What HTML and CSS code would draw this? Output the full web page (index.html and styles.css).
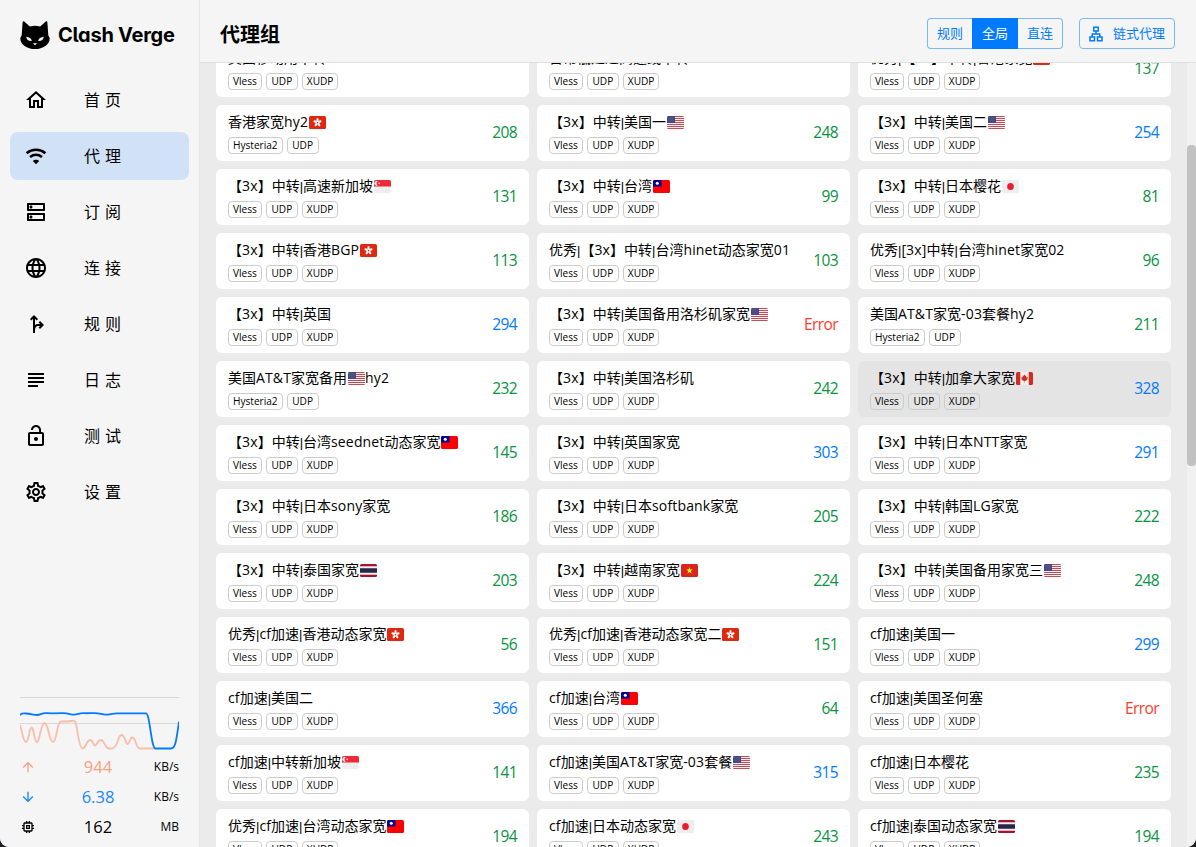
FILE: index.html
```html
<!DOCTYPE html>
<html lang="zh-CN">
<head>
    <meta charset="UTF-8">
    <meta name="viewport" content="width=device-width, initial-scale=1.0">
    <title>Clash Verge</title>
    <link rel="stylesheet" href="styles.css">
</head>
<body>
    <div class="app">
        <aside class="sidebar">
            <div class="brand">
                <svg class="brand-logo" viewBox="0 0 30 28">
                    <path d="M2.600 1.600C2.800.2 3.600 0 4.500.8l5.300 4.600c3.400-.8 7-.8 10.400 0L25.500.8c.9-.8 1.700-.6 1.900.8l.9 12.600c.3 1 1.400 1.800 1.400 3.200C29.700 23.500 23 28 15 28S.3 23.500.3 17.400c0-1.400 1.100-2.200 1.400-3.200z"/>
                    <path class="brand-face" d="M6.200 15.800c3 .2 5.200 1.700 5.600 4.200-3 .3-5.400-1.200-5.600-4.200zM23.800 15.800c-3 .2-5.200 1.700-5.600 4.200 3 .3 5.400-1.200 5.600-4.200zM12.800 22.200h4.400L15 24.200z"/>
                </svg>
                <span class="brand-name">Clash Verge</span>
            </div>

            <nav class="menu">
                <a class="menu-item">
                    <svg class="icon" viewBox="0 0 24 24"><path d="m12 5.690 5 4.500V18h-2v-6H9v6H7v-7.810zM12 3 2 12h3v8h6v-6h2v6h6v-8h3z"/></svg>
                    <span>首页</span>
                </a>
                <a class="menu-item active">
                    <svg class="icon" viewBox="0 0 24 24">
                        <path class="line" d="M2.600 9.200c5.400-4.600 13.400-4.600 18.800 0M6 13c3.600-2.900 8.400-2.900 12 0"/>
                        <path d="M12 15.800c1.300 0 2.400.5 3.200 1.200L12 20.200 8.800 17c.8-.7 1.900-1.200 3.200-1.200z"/>
                    </svg>
                    <span>代理</span>
                </a>
                <a class="menu-item">
                    <svg class="icon" viewBox="0 0 24 24"><path d="M19 15v4H5v-4h14m1-2H4c-.55 0-1 .45-1 1v6c0 .55.45 1 1 1h16c.55 0 1-.45 1-1v-6c0-.55-.45-1-1-1zM7 18.500c-.82 0-1.500-.67-1.500-1.500s.68-1.500 1.500-1.500 1.500.67 1.500 1.500-.67 1.500-1.500 1.500zM19 5v4H5V5h14m1-2H4c-.55 0-1 .45-1 1v6c0 .55.45 1 1 1h16c.55 0 1-.45 1-1V4c0-.55-.45-1-1-1zM7 8.500c-.82 0-1.500-.67-1.500-1.500S6.180 5.500 7 5.500s1.500.68 1.500 1.500S7.830 8.500 7 8.500z"/></svg>
                    <span>订阅</span>
                </a>
                <a class="menu-item">
                    <svg class="icon" viewBox="0 0 24 24"><path d="M11.990 2C6.470 2 2 6.480 2 12s4.470 10 9.990 10C17.520 22 22 17.520 22 12S17.520 2 11.990 2zm6.930 6h-2.950c-.32-1.250-.78-2.450-1.380-3.560 1.840.63 3.370 1.910 4.330 3.560zM12 4.040c.83 1.200 1.480 2.530 1.910 3.960h-3.820c.43-1.430 1.080-2.760 1.910-3.960zM4.260 14C4.100 13.360 4 12.690 4 12s.1-1.360.26-2h3.380c-.08.66-.14 1.320-.14 2s.06 1.340.14 2H4.260zm.82 2h2.950c.32 1.250.78 2.450 1.380 3.560-1.840-.63-3.370-1.900-4.330-3.560zm2.950-8H5.080c.96-1.660 2.490-2.930 4.330-3.560C8.810 5.550 8.350 6.750 8.030 8zM12 19.960c-.83-1.200-1.480-2.530-1.910-3.960h3.820c-.43 1.430-1.080 2.760-1.910 3.960zM14.340 14H9.660c-.09-.66-.16-1.320-.16-2s.07-1.350.16-2h4.680c.09.65.16 1.320.16 2s-.07 1.340-.16 2zm.25 5.560c.6-1.110 1.060-2.310 1.380-3.560h2.950c-.96 1.650-2.490 2.930-4.330 3.560zM16.360 14c.08-.66.14-1.320.14-2s-.06-1.340-.14-2h3.380c.16.64.26 1.310.26 2s-.1 1.360-.26 2h-3.380z"/></svg>
                    <span>连接</span>
                </a>
                <a class="menu-item">
                    <svg class="icon" viewBox="0 0 24 24"><path class="fork" d="M10 21V5M6.700 7.700 10 4.400l3.300 3.300M10 18c.3-3.300 1.500-5 4-5h4M15.300 9.700l3.300 3.300-3.300 3.300"/></svg>
                    <span>规则</span>
                </a>
                <a class="menu-item">
                    <svg class="icon" viewBox="0 0 24 24"><path d="M14 17H4v2h10v-2zm6-8H4v2h16V9zM4 15h16v-2H4v2zM4 5v2h16V5H4z"/></svg>
                    <span>日志</span>
                </a>
                <a class="menu-item">
                    <svg class="icon" viewBox="0 0 24 24"><path d="M12 17c1.100 0 2-.9 2-2s-.9-2-2-2-2 .9-2 2 .9 2 2 2zm6-9h-1V6c0-2.760-2.240-5-5-5S7 3.240 7 6h1.900c0-1.710 1.390-3.100 3.100-3.100s3.100 1.390 3.100 3.100v2H6c-1.100 0-2 .9-2 2v10c0 1.100.9 2 2 2h12c1.100 0 2-.9 2-2V10c0-1.100-.9-2-2-2zm0 12H6V10h12v10z"/></svg>
                    <span>测试</span>
                </a>
                <a class="menu-item">
                    <svg class="icon" viewBox="0 0 24 24"><path d="M19.430 12.980c.04-.32.07-.64.07-.98 0-.34-.03-.66-.07-.98l2.110-1.650c.19-.15.24-.42.12-.64l-2-3.460c-.09-.16-.26-.25-.44-.25-.06 0-.12.01-.17.03l-2.490 1c-.52-.4-1.080-.73-1.690-.98l-.38-2.650C14.460 2.180 14.250 2 14 2h-4c-.25 0-.46.18-.49.42l-.38 2.650c-.61.25-1.170.59-1.690.98l-2.490-1c-.06-.02-.12-.03-.18-.03-.17 0-.34.09-.43.25l-2 3.460c-.13.22-.07.49.12.64l2.110 1.650c-.04.32-.07.65-.07.98 0 .33.03.66.07.98l-2.110 1.650c-.19.15-.24.42-.12.64l2 3.460c.09.16.26.25.44.25.06 0 .12-.01.17-.03l2.490-1c.52.4 1.080.73 1.690.98l.38 2.650c.03.24.24.42.49.42h4c.25 0 .46-.18.49-.42l.38-2.650c.61-.25 1.170-.59 1.690-.98l2.490 1c.06.02.12.03.18.03.17 0 .34-.09.43-.25l2-3.460c.12-.22.07-.49-.12-.64l-2.110-1.650zm-1.980-1.710c.04.31.05.52.05.73 0 .21-.02.43-.05.73l-.14 1.130.89.7 1.080.84-.7 1.210-1.270-.51-1.040-.42-.9.68c-.43.32-.84.56-1.250.73l-1.060.43-.16 1.130-.2 1.350h-1.400l-.19-1.350-.16-1.130-1.060-.43c-.43-.18-.83-.41-1.230-.71l-.91-.7-1.060.43-1.270.51-.7-1.210 1.080-.84.89-.7-.14-1.130c-.03-.31-.05-.54-.05-.74s.02-.43.05-.73l.14-1.130-.89-.7-1.080-.84.7-1.210 1.270.51 1.040.42.9-.68c.43-.32.84-.56 1.250-.73l1.060-.43.16-1.130.2-1.350h1.390l.19 1.350.16 1.130 1.060.43c.43.18.83.41 1.230.71l.91.7 1.060-.43 1.270-.51.7 1.210-1.070.85-.89.7.14 1.130zM12 8c-2.210 0-4 1.790-4 4s1.790 4 4 4 4-1.790 4-4-1.790-4-4-4zm0 6c-1.100 0-2-.9-2-2s.9-2 2-2 2 .9 2 2-.9 2-2 2z"/></svg>
                    <span>设置</span>
                </a>
            </nav>

            <div class="traffic">
                <svg class="graph" viewBox="0 0 159 54">
                    <path class="grid-line" d="M0 .5h159M0 26.500h159"/>
                    <path class="up-line" d="M0 28C2 33 3 45 6 45s3-14.500 5.500-14.500S14 45 17 45s3.500-19 7.500-19S29 45 33 45s3.500-20 8-20.500h6c7-.5 7-2 8.500 1S59 51.500 62.500 51.500s4-8.500 7.500-8.500 3 5.500 5 5.500 2.500-5.500 6-5.500 4 8.500 8 8.500h3c6 0 5.500-13.500 9.500-13.500S105 47 107.500 47s1.500-6.500 5-6.500 3.500 11 7 11H136"/>
                    <path class="down-line" d="M0 18c2-2 3-1.500 6-1.500 5 0 7 1.500 11 1.500s4-2 9-1.800c6 .3 10 .2 16 0 7-.2 8 1.400 12 1.400s5-1.600 10-1.400c5 .2 7-.2 11 0 5 .2 7 1.400 11 1.400s6-1.200 11-1.200h29c4 0 5 35.100 9.500 35.100H151c4 0 5-5 8-27"/>
                </svg>
                <div class="stat up">
                    <svg class="stat-icon" viewBox="0 0 24 24"><path d="m4 12 1.410 1.410L11 7.830V20h2V7.830l5.580 5.590L20 12l-8-8z"/></svg>
                    <span class="value">944</span>
                    <span class="unit">KB/s</span>
                </div>
                <div class="stat down">
                    <svg class="stat-icon" viewBox="0 0 24 24"><path d="m20 12-1.410-1.410L13 16.170V4h-2v12.170l-5.580-5.590L4 12l8 8z"/></svg>
                    <span class="value">6.38</span>
                    <span class="unit">KB/s</span>
                </div>
                <div class="stat">
                    <svg class="stat-icon" viewBox="0 0 24 24"><path d="M15 9H9v6h6V9zm-2 4h-2v-2h2v2zm8-2V9h-2V7c0-1.100-.9-2-2-2h-2V3h-2v2h-2V3H9v2H7c-1.100 0-2 .9-2 2v2H3v2h2v2H3v2h2v2c0 1.100.9 2 2 2h2v2h2v-2h2v2h2v-2h2c1.100 0 2-.9 2-2v-2h2v-2h-2v-2h2zm-4 6H7V7h10v10z"/></svg>
                    <span class="value">162</span>
                    <span class="unit">MB</span>
                </div>
            </div>
        </aside>

        <main class="content">
            <header class="header">
                <h1>代理组</h1>
                <div class="modes">
                    <button>规则</button>
                    <button class="selected">全局</button>
                    <button>直连</button>
                </div>
                <button class="chain-btn">
                    <svg viewBox="0 0 24 24"><path d="M13 22h8v-7h-3v-4h-5V9h3V2H8v7h3v2H6v4H3v7h8v-7H8v-2h8v2h-3v7zM10 7V4h4v3h-4zM9 17v3H5v-3h4zm10 0v3h-4v-3h4z"/></svg>
                    <span>链式代理</span>
                </button>
            </header>
            <div class="body">
                <div class="proxies" id="proxies"></div>
                <div class="scrollbar"><div class="thumb"></div></div>
            </div>
        </main>
    </div>

    <script>
        // [name, delay, protocol]; {xx} in a name is a country flag
        const proxies = [
            ['美国移动用中转', ''],
            ['日常低延迟高速线中转', ''],
            ['优秀|【3x】中转|香港家宽{hk}', 137],
            ['香港家宽hy2{hk}', 208, 'Hysteria2'],
            ['【3x】中转|美国一{us}', 248],
            ['【3x】中转|美国二{us}', 254],
            ['【3x】中转|高速新加坡{sg}', 131],
            ['【3x】中转|台湾{tw}', 99],
            ['【3x】中转|日本樱花{jp}', 81],
            ['【3x】中转|香港BGP{hk}', 113],
            ['优秀|【3x】中转|台湾hinet动态家宽01', 103],
            ['优秀|[3x]中转|台湾hinet家宽02', 96],
            ['【3x】中转|英国', 294],
            ['【3x】中转|美国备用洛杉矶家宽{us}', 'Error'],
            ['美国AT&T家宽-03套餐hy2', 211, 'Hysteria2'],
            ['美国AT&T家宽备用{us}hy2', 232, 'Hysteria2'],
            ['【3x】中转|美国洛杉矶', 242],
            ['【3x】中转|加拿大家宽{ca}', 328],
            ['【3x】中转|台湾seednet动态家宽{tw}', 145],
            ['【3x】中转|英国家宽', 303],
            ['【3x】中转|日本NTT家宽', 291],
            ['【3x】中转|日本sony家宽', 186],
            ['【3x】中转|日本softbank家宽', 205],
            ['【3x】中转|韩国LG家宽', 222],
            ['【3x】中转|泰国家宽{th}', 203],
            ['【3x】中转|越南家宽{vn}', 224],
            ['【3x】中转|美国备用家宽三{us}', 248],
            ['优秀|cf加速|香港动态家宽{hk}', 56],
            ['优秀|cf加速|香港动态家宽二{hk}', 151],
            ['cf加速|美国一', 299],
            ['cf加速|美国二', 366],
            ['cf加速|台湾{tw}', 64],
            ['cf加速|美国圣何塞', 'Error'],
            ['cf加速|中转新加坡{sg}', 141],
            ['cf加速|美国AT&T家宽-03套餐{us}', 315],
            ['cf加速|日本樱花', 235],
            ['优秀|cf加速|台湾动态家宽{tw}', 194],
            ['cf加速|日本动态家宽{jp}', 243],
            ['cf加速|泰国动态家宽{th}', 194]
        ];
        const selectedIndex = 17;

        // Flag artwork, drawn on a 36x26 field
        const petals = [0, 72, 144, 216, 288]
            .map(a => `<ellipse cx="18" cy="8" rx="2.4" ry="4" transform="rotate(${a} 18 13)"/>`)
            .join('');
        const flags = {
            hk: `<path fill="#de2910" d="M0 0h36v26H0z"/><g fill="#fff">${petals}</g>`,
            us: '<path fill="#eee" d="M0 0h36v26H0z"/><path fill="#b22334" fill-opacity=".8" d="M0 0h36v2H0zM0 4h36v2H0zM0 8h36v2H0zM0 12h36v2H0zM0 16h36v2H0zM0 20h36v2H0zM0 24h36v2H0z"/><path fill="#46467f" d="M0 0h17v14H0z"/><path stroke="#a5a5c4" stroke-dasharray="1 3" d="M2 3h14M4 5.500h12M2 8h14M4 10.500h12"/>',
            sg: '<path fill="#eee" d="M0 0h36v26H0z"/><path fill="#ed2939" d="M0 0h36v13H0z"/><path fill="#fff" d="M8 2a5 5 0 1 0 0 9 5 5 0 0 1 0-9z"/><circle cx="11" cy="6.500" r="1.600" fill="#fff"/>',
            tw: '<path fill="#fe0000" d="M0 0h36v26H0z"/><path fill="#000095" d="M0 0h18v13H0z"/><circle cx="9" cy="6.500" r="3.200" fill="#fff"/>',
            jp: '<path fill="#eee" d="M0 0h36v26H0z"/><circle cx="18" cy="13" r="7" fill="#ed1b2f"/>',
            ca: '<path fill="#eee" d="M0 0h36v26H0z"/><path fill="#d52b1e" d="M0 0h9v26H0zM27 0h9v26h-9zM18 5l2 3 2-1-.500 4 3.500-1-1 3 1 1-5 4h-4l-5-4 1-1-1-3 3.500 1L14 7l2 1zM17.500 17h1v4h-1z"/>',
            th: '<path fill="#eee" d="M0 0h36v26H0z"/><path fill="#a7122d" d="M0 0h36v4.500H0zM0 21.500h36V26H0z"/><path fill="#292648" d="M0 8.500h36v9H0z"/>',
            vn: '<path fill="#da251d" d="M0 0h36v26H0z"/><path fill="#ff0" d="m18 6 1.700 5h5.300l-4.300 3.200 1.600 5.100-4.300-3.100-4.300 3.100 1.600-5.100L11 11h5.300z"/>'
        };

        function renderName(name) {
            return name.split(/(\{\w\w\})/).map(part => {
                const flag = part.match(/^\{(\w\w)\}$/);
                if (flag) {
                    return `<svg class="flag" viewBox="0 0 36 26" preserveAspectRatio="none">${flags[flag[1]]}</svg>`;
                }
                return part
                    .replace(/[\w&\-\[\]]+/g, m => `<span class="latin">${m.replace('&', '&amp;')}</span>`)
                    .replace(/\|/g, '<span class="bar">|</span>');
            }).join('');
        }

        function delayClass(delay) {
            if (delay === 'Error') return 'error';
            return delay > 250 ? 'slow' : 'fast';
        }

        document.getElementById('proxies').innerHTML = proxies.map(([name, delay, type], i) => {
            const tags = type ? [type, 'UDP'] : ['Vless', 'UDP', 'XUDP'];
            return `
                <div class="proxy ${i === selectedIndex ? 'selected' : ''}">
                    <div class="info">
                        <div class="name">${renderName(name)}</div>
                        <div class="tags">${tags.map(t => `<span class="tag">${t}</span>`).join('')}</div>
                    </div>
                    <div class="delay ${delayClass(delay)}">${delay}</div>
                </div>
            `;
        }).join('');
    </script>
</body>
</html>
```
FILE: styles.css
```css
* {
    box-sizing: border-box;
}
body {
    margin: 0;
    background-color: #1e1e24;
    color: #000;
    font-family: "Open Sans", "Noto Sans CJK SC", sans-serif;
}
.app {
    display: flex;
    height: 847px;
    border-radius: 0 0 9px 9px;
    background-color: #ebebeb;
    overflow: hidden;
}

/* Sidebar */
.sidebar {
    display: flex;
    flex-direction: column;
    width: 200px;
    background-color: #f5f5f5;
    border-right: 1px solid #e5e5e5;
}
.brand {
    display: flex;
    align-items: center;
    gap: 8px;
    height: 72px;
    padding: 0 0 2px 20px;
}
.brand-logo {
    width: 30px;
    height: 28px;
}
.brand-face {
    fill: #f5f5f5;
}
.brand-name {
    font-family: Inter, "Open Sans", sans-serif;
    font-size: 20px;
    font-weight: 700;
    font-feature-settings: "cv11", "cv05";
    letter-spacing: -.25px;
    white-space: nowrap;
}
.menu {
    flex: 1;
    padding: 0 10px;
}
.menu-item {
    display: flex;
    align-items: center;
    height: 48px;
    margin: 4px 0 8px;
    padding-left: 14px;
    border-radius: 8px;
}
.menu-item.active {
    background-color: #d1e2f7;
}
.menu-item span {
    margin: -2px 0 0 36px;
    font-size: 16px;
    letter-spacing: 5px;
}
.icon {
    width: 24px;
    height: 24px;
}
.line, .fork {
    fill: none;
    stroke: #000;
    stroke-width: 2.6;
}
.fork {
    stroke-width: 2;
}
.traffic {
    padding: 0 20px 5px;
}
.graph {
    display: block;
    width: 159px;
    height: 54px;
    margin-bottom: 1px;
    fill: none;
}
.grid-line {
    stroke: #d9d9d9;
}
.up-line {
    stroke: #f9bda8;
    stroke-width: 1.8;
}
.down-line {
    stroke: #007aff;
    stroke-width: 1.8;
}
.stat {
    display: flex;
    align-items: center;
    height: 30px;
}
.stat-icon {
    width: 16px;
    height: 16px;
}
.value {
    flex: 1;
    margin-top: -2px;
    padding-left: 24px;
    font-size: 16.5px;
    text-align: center;
}
.unit {
    width: 43px;
    margin-top: -2px;
    font-size: 12px;
    text-align: right;
}
.up .value, .up svg {
    color: #f99f80;
    fill: #f99f80;
}
.down .value, .down svg {
    color: #1a86ff;
    fill: #1a86ff;
}

/* Main area */
.content {
    display: flex;
    flex: 1;
    flex-direction: column;
    min-width: 0;
}
.header {
    display: flex;
    align-items: center;
    height: 63px;
    padding: 4px 21px 0 20px;
    background-color: #f5f5f5;
    border-bottom: 1px solid #e0e0e0;
}
h1 {
    flex: 1;
    margin: 0;
    font-size: 20px;
    font-weight: 700;
}
button {
    height: 31px;
    padding: 0 0 2px;
    border: 1px solid #7ab8fa;
    background-color: transparent;
    color: #007aff;
    font-family: inherit;
    font-size: 13px;
}
.modes {
    display: flex;
    margin-right: 16px;
}
.modes button {
    width: 46px;
}
.modes button:first-child {
    width: 45px;
    border-right: none;
    border-radius: 4px 0 0 4px;
}
.modes button:last-child {
    width: 45px;
    border-left: none;
    border-radius: 0 4px 4px 0;
}
.modes .selected {
    border-color: #007aff;
    background-color: #007aff;
    color: #fff;
}
.chain-btn {
    display: flex;
    align-items: center;
    justify-content: space-between;
    width: 96px;
    padding: 0 9px 2px 7px;
    border-radius: 4px;
}
.chain-btn svg {
    width: 18px;
    height: 18px;
    margin-top: 3px;
    fill: #007aff;
}
.body {
    display: flex;
    flex: 1;
    min-height: 0;
    overflow: hidden;
}
.proxies {
    display: grid;
    flex: 1;
    grid-template-columns: repeat(3, 313px);
    grid-auto-rows: 56px;
    gap: 8px;
    margin: -22px 0 0 16px;
}
.proxy {
    display: flex;
    align-items: center;
    justify-content: space-between;
    padding: 0 12px;
    border-radius: 6px;
    background-color: #fff;
}
.proxy.selected {
    background-color: #e4e4e4;
}
.info {
    height: 44px;
}
.name {
    height: 20px;
    margin-bottom: 6px;
    font-family: "Noto Sans CJK SC", sans-serif;
    font-size: 14px;
    line-height: 20px;
    white-space: nowrap;
}
.latin {
    font-family: "Open Sans", sans-serif;
    font-size: 14px;
    letter-spacing: .15px;
}
.bar {
    font-family: "Liberation Sans", sans-serif;
    font-size: 13px;
}
.flag {
    width: 17px;
    height: 13px;
    margin: 0 .5px;
    border-radius: 1.5px;
    vertical-align: -2px;
}
.tags {
    display: flex;
    gap: 4px;
}
.tag {
    min-width: 32px;
    height: 17px;
    padding: 0 4px;
    border: 1px solid #ccc;
    border-radius: 4px;
    font-size: 10.1px;
    line-height: 14px;
    text-align: center;
}
.delay {
    margin-top: -2px;
    font-size: 15.5px;
    letter-spacing: -.6px;
}
.fast {
    color: #06943d;
}
.slow {
    color: #007aff;
}
.error {
    color: #ff3b30;
}
.scrollbar {
    width: 9px;
    padding-top: 82px;
    background-color: #f1f1f1;
}
.thumb {
    height: 321px;
    border-radius: 4px;
    background-color: #c1c1c1;
}
```
